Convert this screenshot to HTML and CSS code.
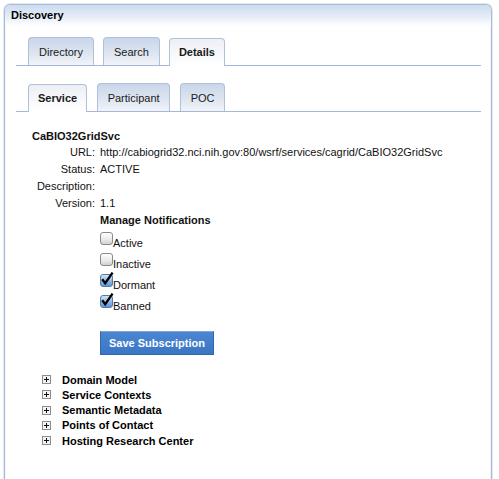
FILE: index.html
```html
<!DOCTYPE html>
<html>
<head>
<meta charset="utf-8">
<title>Discovery</title>
<link rel="stylesheet" href="styles.css">
</head>
<body>
<div class="panel">
  <div class="panel-header">Discovery</div>
  <div class="panel-body">
    <div class="tabs">
      <div class="tab">Directory</div>
      <div class="tab">Search</div>
      <div class="tab active">Details</div>
    </div>
    <div class="tabs tabs-sub">
      <div class="tab active">Service</div>
      <div class="tab">Participant</div>
      <div class="tab tab-poc">POC</div>
    </div>
    <div class="details">
      <div class="svc-name">CaBIO32GridSvc</div>
      <div class="props">
        <div class="prop-label">URL:</div><div class="prop-value">http://cabiogrid32.nci.nih.gov:80/wsrf/services/cagrid/CaBIO32GridSvc</div>
        <div class="prop-label">Status:</div><div class="prop-value">ACTIVE</div>
        <div class="prop-label">Description:</div><div class="prop-value"></div>
        <div class="prop-label">Version:</div><div class="prop-value">1.1</div>
        <div class="prop-label"></div>
        <div class="notify">
          <div class="notify-title">Manage Notifications</div>
          <div class="check"><span class="box"></span><span class="check-text">Active</span></div>
          <div class="check"><span class="box"></span><span class="check-text">Inactive</span></div>
          <div class="check"><span class="box checked"><svg class="tick" width="14" height="14" viewBox="0 0 14 14"><path d="M2.2 7.2 L5.2 11.2 L12.6 0.6" fill="none" stroke="#000" stroke-width="2.3" stroke-linejoin="miter"/></svg></span><span class="check-text">Dormant</span></div>
          <div class="check"><span class="box checked"><svg class="tick" width="14" height="14" viewBox="0 0 14 14"><path d="M2.2 7.2 L5.2 11.2 L12.6 0.6" fill="none" stroke="#000" stroke-width="2.3" stroke-linejoin="miter"/></svg></span><span class="check-text">Banned</span></div>
          <button class="save-btn" type="button">Save Subscription</button>
        </div>
      </div>
    </div>
    <ul class="tree">
      <li><svg class="plus" width="9" height="9" viewBox="0 0 9 9"><rect x="0.5" y="0.5" width="8" height="8" fill="#f3f3f3" stroke="#8d8d8d"/><path d="M2 4.5 H7 M4.5 2 V7" stroke="#111" stroke-width="1"/></svg>Domain Model</li>
      <li><svg class="plus" width="9" height="9" viewBox="0 0 9 9"><rect x="0.5" y="0.5" width="8" height="8" fill="#f3f3f3" stroke="#8d8d8d"/><path d="M2 4.5 H7 M4.5 2 V7" stroke="#111" stroke-width="1"/></svg>Service Contexts</li>
      <li><svg class="plus" width="9" height="9" viewBox="0 0 9 9"><rect x="0.5" y="0.5" width="8" height="8" fill="#f3f3f3" stroke="#8d8d8d"/><path d="M2 4.5 H7 M4.5 2 V7" stroke="#111" stroke-width="1"/></svg>Semantic Metadata</li>
      <li><svg class="plus" width="9" height="9" viewBox="0 0 9 9"><rect x="0.5" y="0.5" width="8" height="8" fill="#f3f3f3" stroke="#8d8d8d"/><path d="M2 4.5 H7 M4.5 2 V7" stroke="#111" stroke-width="1"/></svg>Points of Contact</li>
      <li><svg class="plus" width="9" height="9" viewBox="0 0 9 9"><rect x="0.5" y="0.5" width="8" height="8" fill="#f3f3f3" stroke="#8d8d8d"/><path d="M2 4.5 H7 M4.5 2 V7" stroke="#111" stroke-width="1"/></svg>Hosting Research Center</li>
    </ul>
  </div>
</div>
</body>
</html>
```

FILE: styles.css
```css
html, body {
  margin: 0;
  padding: 0;
  background: #ffffff;
}
body {
  font-family: "Liberation Sans", Arial, sans-serif;
  font-size: 11px;
  color: #111;
}
.panel {
  margin: 4px 0 0 4px;
  width: 486px;
  min-height: 490px;
  border: 1px solid #a9bbd6;
  border-bottom: none;
  border-radius: 6px 6px 0 0;
  box-shadow: 0 0 0 1px #e2e9f3, inset 1px 0 0 #f3f6fa, inset -1px 0 0 #eef2f8;
  background: #fff;
}
.panel-header {
  height: 21px;
  line-height: 20px;
  padding-left: 6px;
  font-weight: bold;
  font-size: 11px;
  color: #000;
  border-radius: 5px 5px 0 0;
  background: linear-gradient(#cddcf0 0%, #e4ecf7 55%, #ffffff 100%);
}
.panel-body {
  padding: 11px 10px 0 11px;
}
.tabs {
  display: flex;
  gap: 9px;
  height: 28px;
  padding-left: 12px;
  border-bottom: 1px solid #a3b8d8;
}
.tabs-sub {
  margin-top: 17px;
  gap: 10px;
}
.tab {
  box-sizing: border-box;
  height: 28px;
  line-height: 28px;
  padding: 0 10px;
  border: 1px solid #aec0db;
  border-bottom: none;
  border-radius: 4px 4px 0 0;
  background: linear-gradient(#c9d6e9 0%, #dbe3ef 50%, #f1f4f9 100%);
  color: #1a1a1a;
}
.tab.active {
  margin-top: 1px;
  height: 28px;
  line-height: 26px;
  font-weight: bold;
  background: linear-gradient(#eceff4 0%, #f8f9fb 60%, #ffffff 100%);
  position: relative;
  z-index: 1;
  padding: 0 9px;
}
.tabs-sub .tab {
  padding: 0 9.5px;
}
.tabs-sub .tab.active {
  padding: 0 9px;
}
.details {
  margin: 16px 0 0 16px;
}
.svc-name {
  font-weight: bold;
  line-height: 16px;
}
.props {
  display: grid;
  grid-template-columns: 63px 1fr;
  column-gap: 5px;
  line-height: 17px;
}
.prop-label {
  text-align: right;
  min-height: 17px;
}
.prop-value {
  min-height: 17px;
  white-space: nowrap;
}
.notify-title {
  font-weight: bold;
  line-height: 17px;
}
.check {
  display: flex;
  align-items: flex-start;
  height: 21px;
  line-height: 21px;
}
.notify-title + .check {
  margin-top: 3px;
}
.box {
  position: relative;
  box-sizing: border-box;
  width: 13px;
  height: 13px;
  border: 1px solid #8a8a8a;
  border-radius: 3px;
  background: linear-gradient(#ffffff 0%, #e9e9e9 60%, #d2d2d2 100%);
  flex: none;
}
.box.checked {
  border-color: #5679a8;
  background: linear-gradient(#d2e3f7 0%, #93bbe9 50%, #5f95d8 100%);
}
.tick {
  position: absolute;
  left: -1px;
  top: -3px;
}
.check-text {
  padding-top: 1px;
  line-height: 21px;
}
.save-btn {
  display: block;
  margin-top: 15px;
  width: 114px;
  height: 24px;
  padding: 0;
  border: 1px solid #3466aa;
  border-top-color: #7ea6dc;
  background: linear-gradient(#4b86d2 0%, #3b76c4 100%);
  color: #fff;
  font-family: "Liberation Sans", Arial, sans-serif;
  font-weight: bold;
  font-size: 11px;
  cursor: pointer;
}
.tree {
  list-style: none;
  margin: 17px 0 0 26px;
  padding: 0;
}
.tree li {
  display: flex;
  align-items: center;
  height: 15.25px;
  font-weight: bold;
  color: #000;
}
.plus {
  flex: none;
  margin-right: 11px;
}
```
